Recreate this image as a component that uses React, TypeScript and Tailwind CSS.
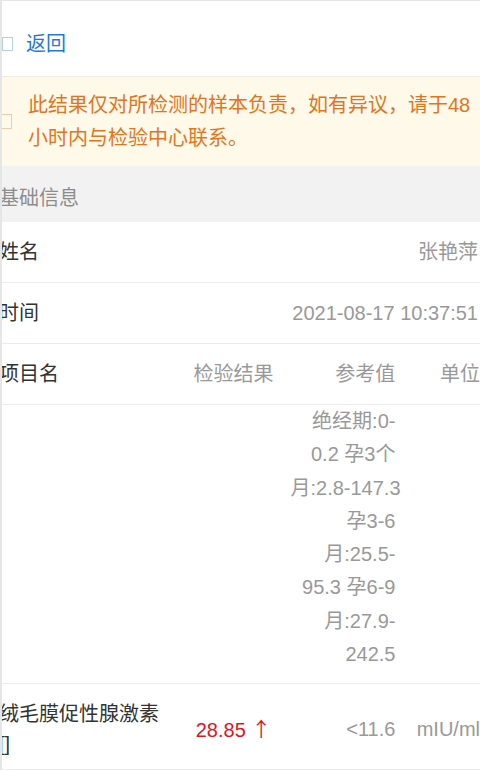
import React from 'react';

const refLines = ['绝经期:0-', '0.2 孕3个', '月:2.8-147.3', '孕3-6', '月:25.5-', '95.3 孕6-9', '月:27.9-', '242.5'];

const InfoRow = ({ label, value }: { label: string; value: string }) => (
  <div className="flex h-[61px] items-center justify-between border-b border-[#ececec] pr-[2px]">
    <span className="-ml-[3px] text-[#333]">{label}</span>
    <span className="text-[#999]">{value}</span>
  </div>
);

export default function App() {
  return (
    <div
      className="h-[770px] w-[480px] overflow-hidden border-l-2 border-t border-[#e6e6e6] bg-white text-[20px] leading-[30px]"
      style={{ fontFamily: '"Liberation Sans", "Noto Sans CJK SC", sans-serif' }}
    >
      {/* header */}
      <div className="flex h-[75px] items-start gap-[13px] pt-[28px]">
        <span className="mt-[8px] h-[14px] w-[11px] border border-[#b9cde4]" />
        <span className="text-[#1f7ad6]">返回</span>
      </div>

      {/* notice */}
      <div className="flex h-[90px] items-center border-t border-[#f0ece0] bg-[#fef9e8]">
        <span className="-ml-[2px] mr-[16px] h-[15px] w-[12px] shrink-0 border border-[#e8cfa9]" />
        <p className="leading-[33px] text-[#e3741d]">
          此结果仅对所检测的样本负责，如有异议，请于48小时内与检验中心联系。
        </p>
      </div>

      {/* section header */}
      <div className="h-[56px] bg-[#f2f2f2] pt-[17px] text-[#8d8d8d]">
        <span className="-ml-[3px]">基础信息</span>
      </div>

      <InfoRow label="姓名" value="张艳萍" />
      <InfoRow label="时间" value="2021-08-17 10:37:51" />

      {/* table header */}
      <div className="-ml-[3px] flex h-[61px] items-center border-b border-[#ececec]">
        <div className="w-[178px] text-[#333]">项目名</div>
        <div className="w-[115px] text-center text-[#999]">检验结果</div>
        <div className="w-[105px] text-right text-[#999]">参考值</div>
        <div className="w-[85px] text-right text-[#999]">单位</div>
      </div>

      {/* reference-only row */}
      <div className="-ml-[3px] flex h-[279px] border-b border-[#ececec]">
        <div className="w-[178px]" />
        <div className="w-[115px]" />
        <div className="w-[105px] text-right leading-[33.3px] text-[#999]">
          {refLines.map((l) => (
            <div key={l} className="whitespace-nowrap">{l}</div>
          ))}
        </div>
        <div className="w-[85px]" />
      </div>

      {/* result row */}
      <div className="-ml-[3px] flex h-[86px] items-center border-b border-[#ececec] pt-[5px]">
        <div className="w-[178px] text-[#333]">
          <div>绒毛膜促性腺激素</div>
          <div>[]</div>
        </div>
        <div className="w-[115px] text-center text-[#e5121c]">
          28.85 <span style={{ fontFamily: '"Noto Sans CJK SC", sans-serif' }}>↑</span>
        </div>
        <div className="w-[105px] text-right text-[#999]">&lt;11.6</div>
        <div className="w-[85px] whitespace-nowrap text-right text-[#999]">mIU/ml</div>
      </div>
    </div>
  );
}
